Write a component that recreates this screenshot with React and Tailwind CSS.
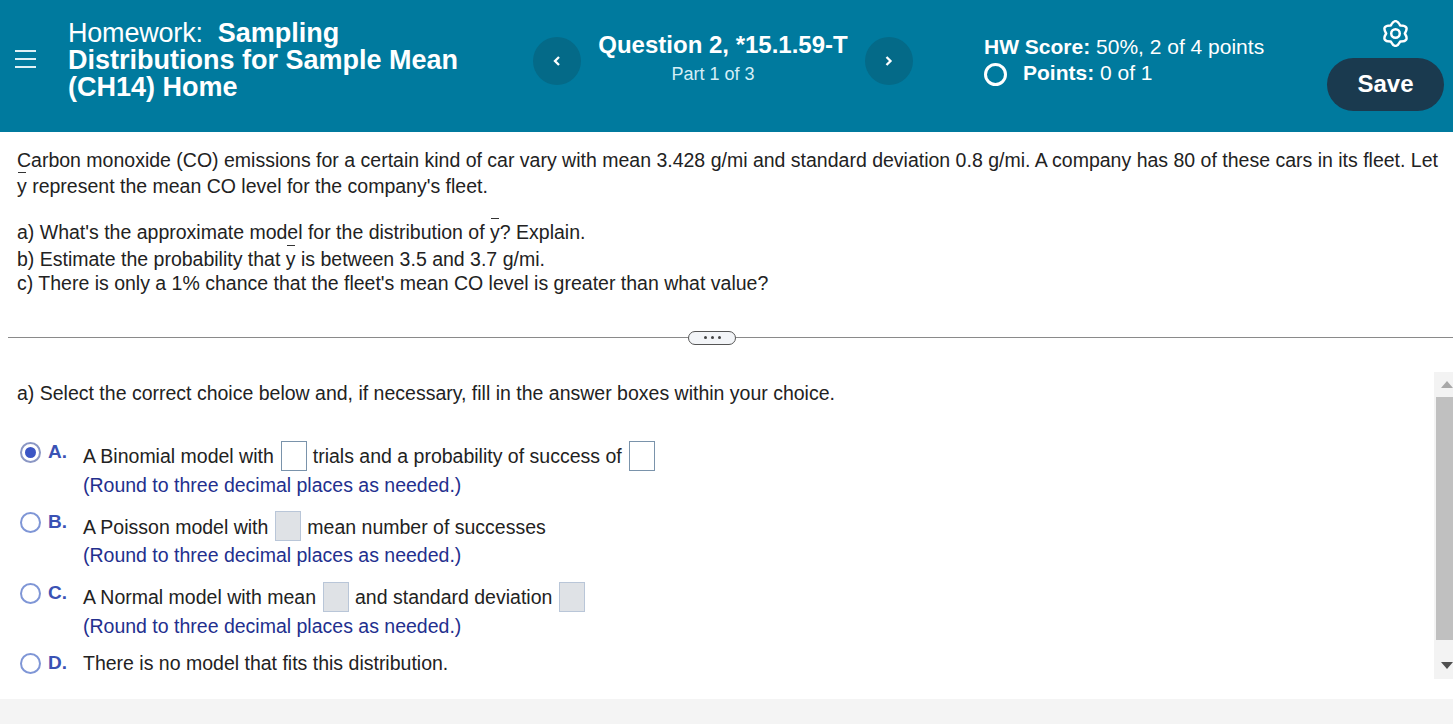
import React from 'react';

const Ybar = () => (
  <span className="relative inline-block">
    y
    <span className="absolute left-[1px] right-[1px] top-[-1px] h-px bg-[#333]"></span>
  </span>
);

const NavButton = ({ dir }) => (
  <button className="w-12 h-12 rounded-full bg-[#046a88] flex items-center justify-center shrink-0">
    <svg width="10" height="12" viewBox="0 0 10 12" fill="none" stroke="white" strokeWidth="2.3">
      {dir === 'left' ? <path d="M7 2 L3 6 L7 10" /> : <path d="M2.5 2 L6.5 6 L2.5 10" />}
    </svg>
  </button>
);

const Radio = ({ checked }) => (
  <span className={`w-[21px] h-[21px] rounded-full border-2 bg-white flex items-center justify-center shrink-0 ${checked ? 'border-[#8b97c4]' : 'border-[#7f96d6]'}`}>
    {checked && <span className="w-[11px] h-[11px] rounded-full bg-[#3b55c4]"></span>}
  </span>
);

const Box = ({ disabled }) => (
  <span className={`w-[26px] h-[30px] border ml-[7px] mr-[6px] shrink-0 ${disabled ? 'bg-[#dfe2e6] border-[#b9c6d8]' : 'bg-white border-[#7a93ab]'}`}></span>
);

const Choice = ({ letter, checked, className, children }) => (
  <div className={`flex items-start ${className}`}>
    <div className="w-[83px] pl-5 flex items-center gap-[7px] h-[22px] shrink-0">
      <Radio checked={checked} />
      <span className="font-bold text-[19px] text-[#3a52b4]">{letter}.</span>
    </div>
    <div className="flex-1">{children}</div>
  </div>
);

const Line = ({ tight, children }) => (
  <div className={`h-[30px] flex items-end whitespace-pre ${tight ? 'leading-[28px]' : 'leading-[30px]'}`}>{children}</div>
);

const Hint = () => <div className="h-[28px] leading-[28px] text-[#232f8e]">(Round to three decimal places as needed.)</div>;

const Arrow = ({ up }) => (
  <svg width="12" height="7" viewBox="0 0 12 7" className={up ? 'fill-[#a8a8a8]' : 'fill-[#505050]'}>
    {up ? <path d="M6 0 L12 7 L0 7 Z" /> : <path d="M0 0 L12 0 L6 7 Z" />}
  </svg>
);

const App = () => {
  return (
    <div className="w-[1453px] h-[724px] overflow-hidden bg-white text-[#222] text-[19.5px] font-['Liberation_Sans',Arial,sans-serif]">
      {/* Barre du haut */}
      <header className="h-[132px] bg-[#007a9e] text-white flex items-start">
        <div className="w-[68px] h-full flex items-center pl-[15px] pb-[14px] shrink-0">
          <div className="w-[21px] flex flex-col gap-[6px]">
            <span className="h-[2px] bg-[#dff1f6]"></span>
            <span className="h-[2px] bg-[#dff1f6]"></span>
            <span className="h-[2px] bg-[#dff1f6]"></span>
          </div>
        </div>
        <h1 className="w-[465px] pt-[20px] text-[27px] leading-[27px] font-bold shrink-0">
          <span className="font-normal tracking-[-0.2px]">Homework:</span>&nbsp; Sampling<br />
          Distributions for Sample Mean<br />
          (CH14) Home
        </h1>
        <div className="mt-[37px]"><NavButton dir="left" /></div>
        <div className="w-[284px] pt-[31px] text-center shrink-0">
          <div className="text-[24px] leading-[28px] font-bold">Question 2, *15.1.59-T</div>
          <div className="text-[18px] leading-[28px] text-[#d5eef6] mt-[1px] pr-[20px]">Part 1 of 3</div>
        </div>
        <div className="mt-[37px]"><NavButton dir="right" /></div>
        <div className="ml-[71px] pt-[33px] text-[21px] w-[343px] shrink-0">
          <div className="leading-[27px]"><b>HW Score:</b> 50%, 2 of 4 points</div>
          <div className="leading-[27px] flex items-center">
            <span className="w-[23px] h-[23px] rounded-full border-[3px] border-white mr-[16px] mt-[2px]"></span>
            <span className="-mt-[1px]"><b>Points:</b> 0 of 1</span>
          </div>
        </div>
        <div className="flex flex-col items-center w-[117px] pt-[20px] shrink-0">
          <svg width="27" height="27" viewBox="0 0 24 24" fill="none" stroke="white" strokeWidth="2.2" strokeLinejoin="round" className="ml-[20px]">
            <path d="M16.15 4.81 Q12 -2.8 7.85 4.81 Q-0.82 4.6 3.7 12 Q-0.82 19.4 7.85 19.19 Q12 26.8 16.15 19.19 Q24.82 19.4 20.3 12 Q24.82 4.6 16.15 4.81 Z" />
            <circle cx="12" cy="12" r="3.8" />
          </svg>
          <button className="mt-[11px] w-[117px] h-[53px] pb-[2px] rounded-full bg-[#1a3a4f] font-bold text-[24px]">Save</button>
        </div>
      </header>

      {/* Enoncé */}
      <section className="pl-[17px] pr-[8px] pt-[15px] h-[191px]">
        <p className="leading-[26px] whitespace-nowrap">Carbon monoxide (CO) emissions for a certain kind of car vary with mean 3.428 g/mi and standard deviation 0.8 g/mi. A company has 80 of these cars in its fleet. Let</p>
        <p className="leading-[26px]"><Ybar /> represent the mean CO level for the company's fleet.</p>
        <p className="leading-[26px] mt-[20px]">a) What's the approximate model for the distribution of <Ybar />? Explain.</p>
        <p className="leading-[26px] mt-[1px]">b) Estimate the probability that <Ybar /> is between 3.5 and 3.7 g/mi.</p>
        <p className="leading-[22px]">c) There is only a 1% chance that the fleet's mean CO level is greater than what value?</p>
      </section>

      {/* Séparateur */}
      <div className="pl-2 h-[29px] flex items-center">
        <div className="w-[680px] h-px bg-[#8a8a8a]"></div>
        <div className="w-12 h-[14px] rounded-full border border-[#555] bg-[#f3f5f8] flex items-center justify-center gap-[4px]">
          <span className="w-[3px] h-[3px] rounded-full bg-[#444]"></span>
          <span className="w-[3px] h-[3px] rounded-full bg-[#444]"></span>
          <span className="w-[3px] h-[3px] rounded-full bg-[#444]"></span>
        </div>
        <div className="flex-1 h-px bg-[#8a8a8a]"></div>
      </div>

      {/* Zone réponse */}
      <section className="flex h-[307px] mt-[20px]">
        <div className="flex-1 min-w-0">
          <div className="pl-[17px] pt-[8px] leading-[26px]">a) Select the correct choice below and, if necessary, fill in the answer boxes within your choice.</div>
          <Choice letter="A" checked className="mt-[35px]">
            <Line>A Binomial model with<Box />trials and a probability of success of<Box /></Line>
            <Hint />
          </Choice>
          <Choice letter="B" className="mt-[12px]">
            <Line tight>A Poisson model with<Box disabled />mean number of successes</Line>
            <Hint />
          </Choice>
          <Choice letter="C" className="mt-[13px]">
            <Line>A Normal model with mean<Box disabled />and standard deviation<Box disabled /></Line>
            <Hint />
          </Choice>
          <Choice letter="D" className="mt-[12px]">
            <div className="h-[22px] leading-[22px]">There is no model that fits this distribution.</div>
          </Choice>
        </div>
        <div className="w-[19px] bg-[#f3f3f3] flex flex-col shrink-0">
          <div className="h-[25px] pt-[9px] pl-[7px] flex items-start"><Arrow up /></div>
          <div className="h-[243px] ml-[2px] bg-[#c0c0c0]"></div>
          <div className="flex-1 pt-[22px] pl-[7px] flex items-start"><Arrow /></div>
        </div>
      </section>
      <div className="h-[20px]"></div>
      <div className="h-[25px] bg-[#f4f4f4]"></div>
    </div>
  );
};

export default App;
